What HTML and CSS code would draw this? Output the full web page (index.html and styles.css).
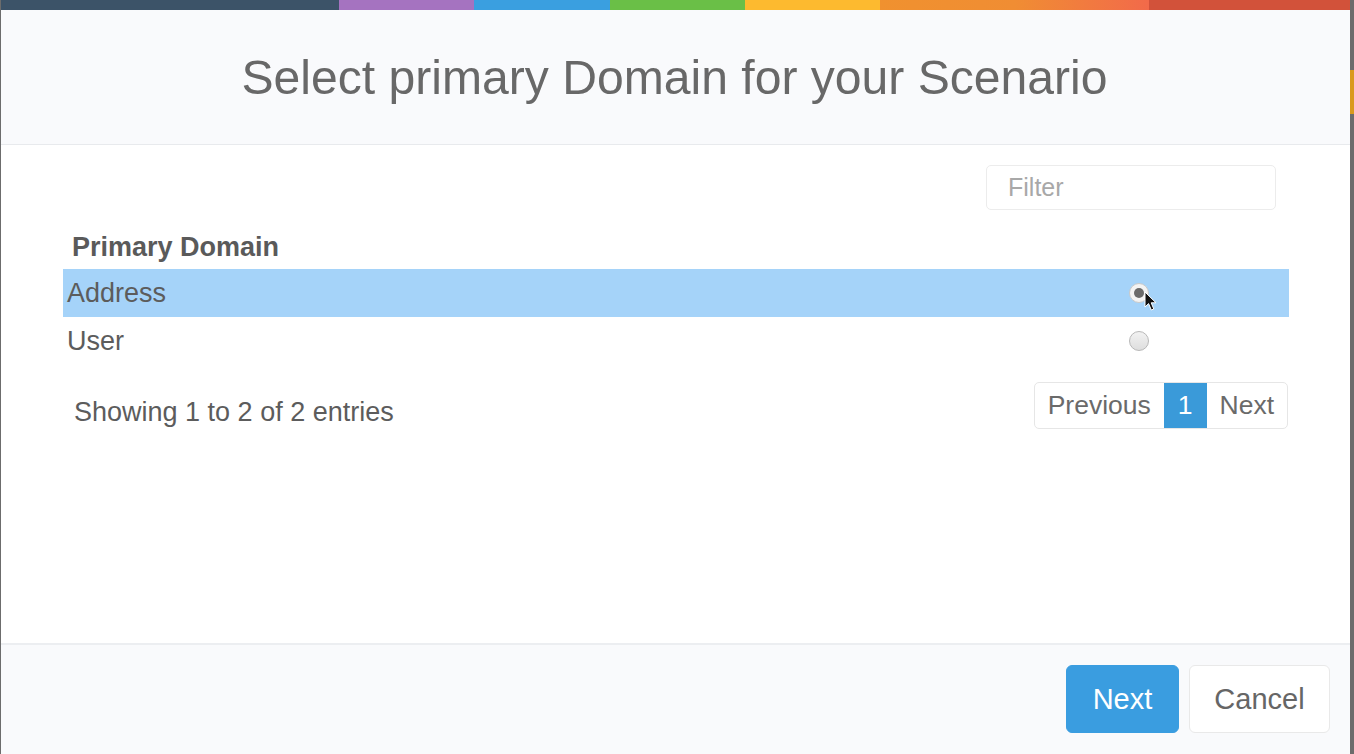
FILE: index.html
```html
<!DOCTYPE html>
<html>
<head>
<meta charset="utf-8">
<link rel="stylesheet" href="styles.css">
</head>
<body>
<div class="backdrop-accent"></div>
<div class="modal">
  <div class="stripe">
    <span class="s1"></span><span class="s2"></span><span class="s3"></span><span class="s4"></span><span class="s5"></span><span class="s6"></span><span class="s7"></span>
  </div>
  <div class="modal-header">
    <h1 class="title">Select primary Domain for your Scenario</h1>
  </div>
  <div class="modal-body">
    <div class="filter-row">
      <input class="filter" type="text" placeholder="Filter">
    </div>
    <div class="table">
      <div class="th">Primary Domain</div>
      <div class="tr selected">
        <span class="cell">Address</span>
        <span class="radio checked"><span class="dot"></span>
          <svg class="cursor" width="14" height="21" viewBox="0 0 14 21"><path d="M1 1 L1 16 L4.6 12.6 L7.3 19 L9.8 18 L7.2 11.8 L12 11.8 Z" fill="#111" stroke="#fff" stroke-width="1"/></svg>
        </span>
      </div>
      <div class="tr">
        <span class="cell">User</span>
        <span class="radio"></span>
      </div>
    </div>
    <div class="table-footer">
      <div class="info">Showing 1 to 2 of 2 entries</div>
      <div class="pager">
        <span class="pg">Previous</span><span class="pg active">1</span><span class="pg">Next</span>
      </div>
    </div>
  </div>
  <div class="modal-footer">
    <button class="btn primary">Next</button>
    <button class="btn default">Cancel</button>
  </div>
</div>
</body>
</html>
```
FILE: styles.css
```css
html, body {
  margin: 0;
  padding: 0;
  height: 754px;
  overflow: hidden;
}
body {
  background: #6c6c6c;
  font-family: "Liberation Sans", Arial, sans-serif;
  color: #585858;
  position: relative;
}
.backdrop-accent {
  position: absolute;
  right: 0;
  top: 70px;
  width: 6px;
  height: 44px;
  background: #d99a1e;
}
.modal {
  position: relative;
  margin-left: 1px;
  width: 1349px;
  height: 754px;
  background: #fff;
  display: flex;
  flex-direction: column;
}
.stripe {
  display: flex;
  height: 10px;
  flex-shrink: 0;
}
.stripe span { display: block; height: 100%; }
.s1 { width: 338px; background: #3c5368; }
.s2 { width: 135px; background: #a573c0; }
.s3 { width: 136px; background: #3a9fe0; }
.s4 { width: 135px; background: #6abf47; }
.s5 { width: 135px; background: #fdba2f; }
.s6 { width: 269px; background: linear-gradient(to right, #f0912f, #f08d33 50%, #f26a4a); }
.s7 { flex: 1; background: #d2523a; }

.modal-header {
  height: 134px;
  background: #f9fafc;
  border-bottom: 1px solid #e8eaed;
  display: flex;
  align-items: center;
  justify-content: center;
  flex-shrink: 0;
}
.title {
  margin: 0;
  font-weight: normal;
  font-size: 48.1px;
  color: #686868;
  padding-right: 2px;
}
.modal-body {
  flex: 1;
  padding: 20px 61px 0 62px;
}
.filter-row {
  display: flex;
  justify-content: flex-end;
  padding-right: 13px;
}
.filter {
  width: 290px;
  height: 45px;
  box-sizing: border-box;
  border: 1px solid #ececec;
  border-radius: 5px;
  padding: 0 21px;
  font-family: "Liberation Sans", Arial, sans-serif;
  font-size: 25px;
  color: #555;
  outline: none;
}
.filter::placeholder { color: #a8a8a8; }

.table { margin-top: 15px; }
.th {
  font-weight: bold;
  font-size: 27px;
  color: #5a5a5a;
  padding: 0 0 0 9px;
  height: 44px;
  line-height: 44px;
}
.tr {
  display: flex;
  align-items: center;
  justify-content: space-between;
  height: 48px;
  padding: 0 140px 0 4px;
  font-size: 27px;
  color: #5c5c5c;
}
.tr.selected { background: #a5d3f9; }
.radio {
  position: relative;
  width: 20px;
  height: 20px;
  box-sizing: border-box;
  border-radius: 50%;
  border: 1px solid #b8b8b8;
  background: linear-gradient(#f2f2f2, #dedede);
  display: flex;
  align-items: center;
  justify-content: center;
}
.radio.checked {
  background: #f3f3f3;
  border-color: #c9c9c9;
}
.dot {
  width: 10px;
  height: 10px;
  border-radius: 50%;
  background: #6a6a6a;
}
.cursor {
  position: absolute;
  left: 14px;
  top: 7px;
}
.table-footer {
  display: flex;
  justify-content: space-between;
  align-items: flex-start;
  margin-top: 17px;
}
.info {
  font-size: 27px;
  color: #5c5c5c;
  padding-left: 11px;
  margin-top: 15px;
}
.pager {
  display: flex;
  height: 47px;
  box-sizing: border-box;
  border: 1px solid #e6e6e6;
  border-radius: 5px;
  overflow: hidden;
  margin-right: 1px;
}
.pg {
  display: flex;
  align-items: center;
  padding: 0 13px;
  font-size: 26.5px;
  color: #6a6a6a;
}
.pg.active {
  background: #3a9ad9;
  color: #fff;
  padding: 0 14px;
}

.modal-footer {
  height: 111px;
  box-sizing: border-box;
  flex-shrink: 0;
  border-top: 2px solid #eceef1;
  background: #f9fafc;
  display: flex;
  justify-content: flex-end;
  align-items: flex-start;
  padding: 20px 20px 0 0;
  gap: 10px;
}
.btn {
  font-family: "Liberation Sans", Arial, sans-serif;
  font-size: 29px;
  height: 68px;
  border-radius: 6px;
  cursor: pointer;
  padding: 0;
}
.btn.primary {
  width: 113px;
  background: #3a9de0;
  border: 1px solid #3a9de0;
  color: #fff;
}
.btn.default {
  width: 141px;
  background: #fff;
  border: 1px solid #e9e9e9;
  color: #666;
}
```
